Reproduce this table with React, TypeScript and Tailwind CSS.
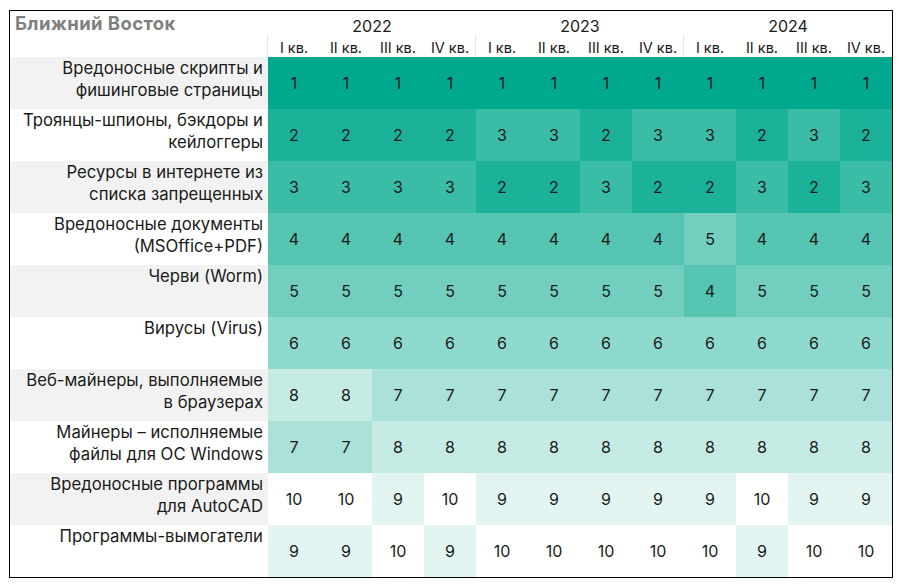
const labels = [
  ["Вредоносные скрипты и", "фишинговые страницы"],
  ["Троянцы-шпионы, бэкдоры и", "кейлоггеры"],
  ["Ресурсы в интернете из", "списка запрещенных"],
  ["Вредоносные документы", "(MSOffice+PDF)"],
  ["Черви (Worm)"],
  ["Вирусы (Virus)"],
  ["Веб-майнеры, выполняемые", "в браузерах"],
  ["Майнеры – исполняемые", "файлы для ОС Windows"],
  ["Вредоносные программы", "для AutoCAD"],
  ["Программы-вымогатели"],
];

const data = [
  [1, 1, 1, 1, 1, 1, 1, 1, 1, 1, 1, 1],
  [2, 2, 2, 2, 3, 3, 2, 3, 3, 2, 3, 2],
  [3, 3, 3, 3, 2, 2, 3, 2, 2, 3, 2, 3],
  [4, 4, 4, 4, 4, 4, 4, 4, 5, 4, 4, 4],
  [5, 5, 5, 5, 5, 5, 5, 5, 4, 5, 5, 5],
  [6, 6, 6, 6, 6, 6, 6, 6, 6, 6, 6, 6],
  [8, 8, 7, 7, 7, 7, 7, 7, 7, 7, 7, 7],
  [7, 7, 8, 8, 8, 8, 8, 8, 8, 8, 8, 8],
  [10, 10, 9, 10, 9, 9, 9, 9, 9, 10, 9, 9],
  [9, 9, 10, 9, 10, 10, 10, 10, 10, 9, 10, 10],
];

// rank -> background
const shade: Record<number, string> = {
  1: "bg-[#00a88e]",
  2: "bg-[#1cb29a]",
  3: "bg-[#3abca6]",
  4: "bg-[#56c6b3]",
  5: "bg-[#72cfc0]",
  6: "bg-[#8ed9cd]",
  7: "bg-[#aae2d9]",
  8: "bg-[#c6ebe5]",
  9: "bg-[#e2f5f2]",
  10: "bg-white",
};

const years = ["2022", "2023", "2024"];
const quarters = ["I кв.", "II кв.", "III кв.", "IV кв."];

export default function App() {
  return (
    <div
      className="w-[901px] h-[587px] bg-white pt-[10px] pl-[9px] text-[#1a1a1a]"
      style={{ fontFamily: "Inter, 'Noto Sans', sans-serif" }}
    >
      <div className="w-[884px] border border-black">
        {/* Header */}
        <div className="flex h-[46px]">
          <div className="w-[258px] pl-[5px] pt-[1px] text-[18.5px] font-bold leading-[22px] tracking-[0.4px] text-[#7f7f7f]">
            Ближний Восток
          </div>
          <div className="flex">
            {years.map((y) => (
              <div key={y} className="w-[208px] flex flex-col">
                <div className="h-[24px] pt-[3px] text-center text-[16px] leading-[24px]">{y}</div>
                <div className="flex h-[22px] border-l border-[#e6e6e6] -ml-px">
                  {quarters.map((q) => (
                    <div key={q} className="w-[52px] pt-[2px] text-center text-[14.5px] leading-[22px]">
                      {q}
                    </div>
                  ))}
                </div>
              </div>
            ))}
          </div>
        </div>

        {/* Rows */}
        {data.map((row, i) => (
          <div key={i} className="flex h-[52px]">
            <div
              className={`w-[258px] pr-[5px] text-right text-[16.7px] leading-[22px] ${
                i % 2 === 0 ? "bg-[#f2f2f2]" : "bg-white"
              }`}
            >
              {labels[i].map((l) => (
                <div key={l} className="whitespace-nowrap">{l}</div>
              ))}
            </div>
            {row.map((v, j) => (
              <div
                key={j}
                className={`w-[52px] flex items-center justify-center text-[16px] ${shade[v]}`}
              >
                {v}
              </div>
            ))}
          </div>
        ))}
      </div>
    </div>
  );
}
